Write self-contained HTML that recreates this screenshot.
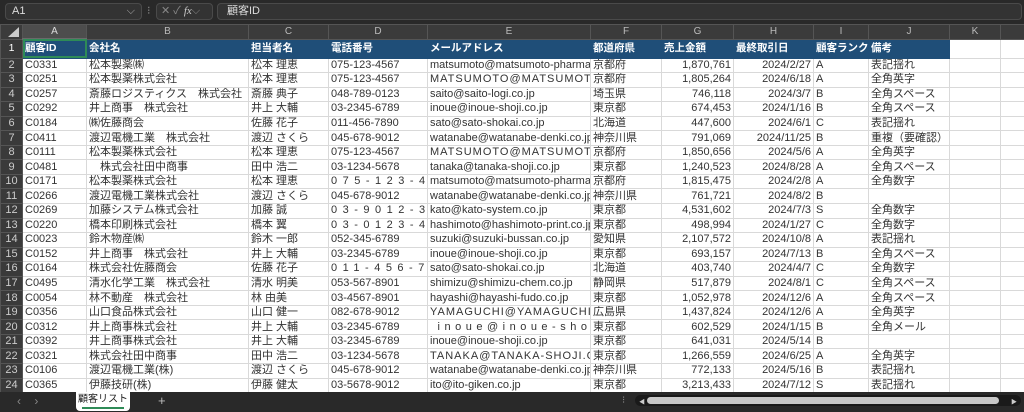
<!DOCTYPE html>
<html style="overflow:hidden;height:412px"><head><meta charset="utf-8"><style>
*{margin:0;padding:0;box-sizing:border-box}
body{width:1024px;height:412px;overflow:hidden;background:#292929;font-family:"Liberation Sans","Noto Sans CJK JP",sans-serif;position:relative}
.box{position:absolute;background:#333;border:1px solid #4a4a4a;border-radius:4px;color:#ddd;font-size:11px;line-height:15px}
table{position:absolute;left:0;top:24px;border-collapse:collapse;table-layout:fixed;width:1024px}
td{overflow:hidden;white-space:nowrap;font-size:11px;padding:0 2px;border:1px solid #d9d9d9;background:#fff;color:#333;height:14.55px;line-height:13px}
tr.ch td{background:#3b3b3b;color:#bbb;border:1px solid #555;text-align:center;height:14px;font-size:10px}
tr.ch td.sel{background:#4d4d4d;color:#ddd;border-bottom:2px solid #6a6a6a}
td.rh{background:#3a3a3a;color:#ccc;text-align:center;border:1px solid #555;padding:0;font-size:11px}
tr.h td{background:#1f4e78;color:#fff;font-weight:bold;height:19px;border-color:#1f4e78;font-size:10.5px}
tr.h td.rh{background:#3a3a3a;border-color:#555;font-weight:normal}
tr.h td.w{background:#fff;border-color:#d9d9d9}
.r{text-align:right}
.s2{letter-spacing:1px}
.s5{letter-spacing:5.5px}
.s4{letter-spacing:4.5px}
</style></head><body>
<div class="box" style="left:5px;top:3px;width:137px;height:17px;padding-left:6px">A1<span style="position:absolute;right:6px;color:#aaa">⌵</span></div>
<div style="position:absolute;left:147px;top:4px;color:#888;font-size:11px">⁝</div>
<div class="box" style="left:156px;top:3px;width:57px;height:17px;color:#888;padding-left:4px">✕ ✓ <i style="font-family:'Liberation Serif',serif;color:#ccc">fx</i>⌵</div>
<div class="box" style="left:217px;top:3px;width:805px;height:17px;padding-left:9px">顧客ID</div>
<table>
<colgroup><col style="width:22px"><col style="width:64px"><col style="width:162px"><col style="width:80px"><col style="width:99px"><col style="width:163px"><col style="width:71px"><col style="width:72px"><col style="width:80px"><col style="width:55px"><col style="width:81px"><col style="width:51px"><col style="width:24px"></colgroup>
<tr class="ch"><td style="background:#3b3b3b"><svg width="14" height="12" style="float:right"><path d="M13 1V11H2Z" fill="#ccc"/></svg></td><td class="sel">A</td><td>B</td><td>C</td><td>D</td><td>E</td><td>F</td><td>G</td><td>H</td><td>I</td><td>J</td><td>K</td><td></td></tr>
<tr class="h"><td class="rh">1</td><td style="outline:2px solid #2e8b57;outline-offset:-2px">顧客ID</td><td>会社名</td><td>担当者名</td><td>電話番号</td><td>メールアドレス</td><td>都道府県</td><td>売上金額</td><td>最終取引日</td><td>顧客ランク</td><td>備考</td><td class="w"></td><td class="w"></td></tr>
<tr><td class="rh">2</td><td>C0331</td><td>松本製薬㈱</td><td>松本 理恵</td><td>075-123-4567</td><td>matsumoto@matsumoto-pharma.co.jp</td><td>京都府</td><td class="r">1,870,761</td><td class="r">2024/2/27</td><td>A</td><td>表記揺れ</td><td></td><td></td></tr>
<tr><td class="rh">3</td><td>C0251</td><td>松本製薬株式会社</td><td>松本 理恵</td><td>075-123-4567</td><td class="s2">MATSUMOTO@MATSUMOTO-PHA</td><td>京都府</td><td class="r">1,805,264</td><td class="r">2024/6/18</td><td>A</td><td>全角英字</td><td></td><td></td></tr>
<tr><td class="rh">4</td><td>C0257</td><td>斎藤ロジスティクス　株式会社</td><td>斎藤 典子</td><td>048-789-0123</td><td>saito@saito-logi.co.jp</td><td>埼玉県</td><td class="r">746,118</td><td class="r">2024/3/7</td><td>B</td><td>全角スペース</td><td></td><td></td></tr>
<tr><td class="rh">5</td><td>C0292</td><td>井上商事　株式会社</td><td>井上 大輔</td><td>03-2345-6789</td><td>inoue@inoue-shoji.co.jp</td><td>東京都</td><td class="r">674,453</td><td class="r">2024/1/16</td><td>B</td><td>全角スペース</td><td></td><td></td></tr>
<tr><td class="rh">6</td><td>C0184</td><td>㈱佐藤商会</td><td>佐藤 花子</td><td>011-456-7890</td><td>sato@sato-shokai.co.jp</td><td>北海道</td><td class="r">447,600</td><td class="r">2024/6/1</td><td>C</td><td>表記揺れ</td><td></td><td></td></tr>
<tr><td class="rh">7</td><td>C0411</td><td>渡辺電機工業　株式会社</td><td>渡辺 さくら</td><td>045-678-9012</td><td>watanabe@watanabe-denki.co.jp</td><td>神奈川県</td><td class="r">791,069</td><td class="r">2024/11/25</td><td>B</td><td>重複（要確認）</td><td></td><td></td></tr>
<tr><td class="rh">8</td><td>C0111</td><td>松本製薬株式会社</td><td>松本 理恵</td><td>075-123-4567</td><td class="s2">MATSUMOTO@MATSUMOTO-PHA</td><td>京都府</td><td class="r">1,850,656</td><td class="r">2024/5/6</td><td>A</td><td>全角英字</td><td></td><td></td></tr>
<tr><td class="rh">9</td><td>C0481</td><td>　株式会社田中商事</td><td>田中 浩二</td><td>03-1234-5678</td><td>tanaka@tanaka-shoji.co.jp</td><td>東京都</td><td class="r">1,240,523</td><td class="r">2024/8/28</td><td>A</td><td>全角スペース</td><td></td><td></td></tr>
<tr><td class="rh">10</td><td>C0171</td><td>松本製薬株式会社</td><td>松本 理恵</td><td class="s5">075-123-4567</td><td>matsumoto@matsumoto-pharma.co.jp</td><td>京都府</td><td class="r">1,815,475</td><td class="r">2024/2/8</td><td>A</td><td>全角数字</td><td></td><td></td></tr>
<tr><td class="rh">11</td><td>C0266</td><td>渡辺電機工業株式会社</td><td>渡辺 さくら</td><td>045-678-9012</td><td>watanabe@watanabe-denki.co.jp</td><td>神奈川県</td><td class="r">761,721</td><td class="r">2024/8/2</td><td>B</td><td></td><td></td><td></td></tr>
<tr><td class="rh">12</td><td>C0269</td><td>加藤システム株式会社</td><td>加藤 誠</td><td class="s5">03-9012-3456</td><td>kato@kato-system.co.jp</td><td>東京都</td><td class="r">4,531,602</td><td class="r">2024/7/3</td><td>S</td><td>全角数字</td><td></td><td></td></tr>
<tr><td class="rh">13</td><td>C0220</td><td>橋本印刷株式会社</td><td>橋本 翼</td><td class="s5">03-0123-4567</td><td>hashimoto@hashimoto-print.co.jp</td><td>東京都</td><td class="r">498,994</td><td class="r">2024/1/27</td><td>C</td><td>全角数字</td><td></td><td></td></tr>
<tr><td class="rh">14</td><td>C0023</td><td>鈴木物産㈱</td><td>鈴木 一郎</td><td>052-345-6789</td><td>suzuki@suzuki-bussan.co.jp</td><td>愛知県</td><td class="r">2,107,572</td><td class="r">2024/10/8</td><td>A</td><td>表記揺れ</td><td></td><td></td></tr>
<tr><td class="rh">15</td><td>C0152</td><td>井上商事　株式会社</td><td>井上 大輔</td><td>03-2345-6789</td><td>inoue@inoue-shoji.co.jp</td><td>東京都</td><td class="r">693,157</td><td class="r">2024/7/13</td><td>B</td><td>全角スペース</td><td></td><td></td></tr>
<tr><td class="rh">16</td><td>C0164</td><td>株式会社佐藤商会</td><td>佐藤 花子</td><td class="s5">011-456-7890</td><td>sato@sato-shokai.co.jp</td><td>北海道</td><td class="r">403,740</td><td class="r">2024/4/7</td><td>C</td><td>全角数字</td><td></td><td></td></tr>
<tr><td class="rh">17</td><td>C0495</td><td>清水化学工業　株式会社</td><td>清水 明美</td><td>053-567-8901</td><td>shimizu@shimizu-chem.co.jp</td><td>静岡県</td><td class="r">517,879</td><td class="r">2024/8/1</td><td>C</td><td>全角スペース</td><td></td><td></td></tr>
<tr><td class="rh">18</td><td>C0054</td><td>林不動産　株式会社</td><td>林 由美</td><td>03-4567-8901</td><td>hayashi@hayashi-fudo.co.jp</td><td>東京都</td><td class="r">1,052,978</td><td class="r">2024/12/6</td><td>A</td><td>全角スペース</td><td></td><td></td></tr>
<tr><td class="rh">19</td><td>C0356</td><td>山口食品株式会社</td><td>山口 健一</td><td>082-678-9012</td><td class="s2">YAMAGUCHI@YAMAGUCHI-FOOD</td><td>広島県</td><td class="r">1,437,824</td><td class="r">2024/12/6</td><td>A</td><td>全角英字</td><td></td><td></td></tr>
<tr><td class="rh">20</td><td>C0312</td><td>井上商事株式会社</td><td>井上 大輔</td><td>03-2345-6789</td><td class="s4">&nbsp;inoue@inoue-shoji. co. jp</td><td>東京都</td><td class="r">602,529</td><td class="r">2024/1/15</td><td>B</td><td>全角メール</td><td></td><td></td></tr>
<tr><td class="rh">21</td><td>C0392</td><td>井上商事株式会社</td><td>井上 大輔</td><td>03-2345-6789</td><td>inoue@inoue-shoji.co.jp</td><td>東京都</td><td class="r">641,031</td><td class="r">2024/5/14</td><td>B</td><td></td><td></td><td></td></tr>
<tr><td class="rh">22</td><td>C0321</td><td>株式会社田中商事</td><td>田中 浩二</td><td>03-1234-5678</td><td class="s2">TANAKA@TANAKA-SHOJI.CO.JP</td><td>東京都</td><td class="r">1,266,559</td><td class="r">2024/6/25</td><td>A</td><td>全角英字</td><td></td><td></td></tr>
<tr><td class="rh">23</td><td>C0106</td><td>渡辺電機工業(株)</td><td>渡辺 さくら</td><td>045-678-9012</td><td>watanabe@watanabe-denki.co.jp</td><td>神奈川県</td><td class="r">772,133</td><td class="r">2024/5/16</td><td>B</td><td>表記揺れ</td><td></td><td></td></tr>
<tr><td class="rh">24</td><td>C0365</td><td>伊藤技研(株)</td><td>伊藤 健太</td><td>03-5678-9012</td><td>ito@ito-giken.co.jp</td><td>東京都</td><td class="r">3,213,433</td><td class="r">2024/7/12</td><td>S</td><td>表記揺れ</td><td></td><td></td></tr>
</table>
<div style="position:absolute;left:0;top:392px;width:1024px;height:20px;background:#292929;overflow:hidden">
<div style="position:absolute;left:17px;top:2px;color:#888;font-size:12px">‹&nbsp;&nbsp;&nbsp;&nbsp;›</div>
<div style="position:absolute;left:76px;top:0;width:54px;height:19px;background:#fff;border-radius:0 0 4px 4px;font-size:10px;color:#222;text-align:center;line-height:15px;white-space:nowrap">顧客リスト<div style="position:absolute;left:6px;right:6px;bottom:2px;height:2px;background:#2e8b57"></div></div>
<div style="position:absolute;left:158px;top:1px;color:#bbb;font-size:13px">+</div>
<div style="position:absolute;left:622px;top:3px;color:#888;font-size:10px">⁝</div>
<div style="position:absolute;left:635px;top:3px;width:386px;height:11px;background:#1a1a1a;border-radius:6px"></div>
<div style="position:absolute;left:639px;top:5px;font-size:6px;color:#ccc">◀</div>
<div style="position:absolute;left:1011px;top:5px;font-size:6px;color:#ccc">▶</div>
<div style="position:absolute;left:647px;top:5px;width:352px;height:7px;background:#c8c8c8;border-radius:4px"></div>
</div>
</body></html>
